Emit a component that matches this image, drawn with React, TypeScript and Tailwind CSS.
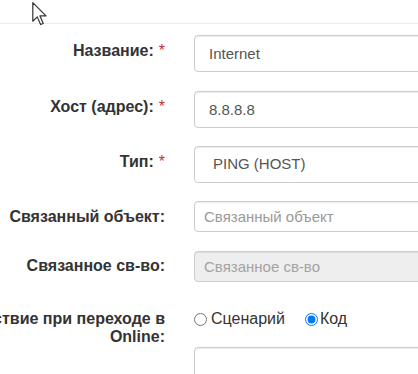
import React from 'react';

const labelCls =
  "w-[250px] shrink-0 pr-[15px] text-right font-bold text-[#333] text-[16px] leading-[18px]";
const boxCls =
  "w-full border border-[#ccc] rounded-[4px] text-[15px] text-[#555] shadow-[inset_0_1px_1px_rgba(0,0,0,0.075)] outline-none";

const Req = () => <span className="text-[#c9302c] font-normal ml-[5px]">*</span>;

const Cursor = () => (
  <svg className="absolute left-[32px] top-[2px]" width="16" height="24" viewBox="0 0 13 20">
    <path
      d="M0.5 0.5 L0.5 16 L4.2 12.4 L7 18.8 L9.2 17.9 L6.5 11.6 L11.5 11.6 Z"
      fill="#fff"
      stroke="#333"
      strokeWidth="1"
      strokeLinejoin="round"
    />
  </svg>
);

export default function App() {
  return (
    <div className="relative w-[418px] h-[374px] overflow-hidden bg-white font-['Liberation_Sans',Arial,sans-serif]">
      <div className="h-[24px] border-b border-[#ebebeb]" />

      <form className="pt-[11px] ml-[-70px]">
        {/* Название */}
        <div className="flex items-start mb-[19px]">
          <label className={`${labelCls} pt-[7px]`}>
            Название:<Req />
          </label>
          <div className="pl-[14px] w-[300px] shrink-0">
            <input className={`${boxCls} bg-white h-[37px] px-[14px]`} defaultValue="Internet" />
          </div>
        </div>

        {/* Хост */}
        <div className="flex items-start mb-[18px]">
          <label className={`${labelCls} pt-[7px]`}>
            Хост (адрес):<Req />
          </label>
          <div className="pl-[14px] w-[300px] shrink-0">
            <input className={`${boxCls} bg-white h-[37px] px-[14px]`} defaultValue="8.8.8.8" />
          </div>
        </div>

        {/* Тип */}
        <div className="flex items-start mb-[18px]">
          <label className={`${labelCls} pt-[7px]`}>
            Тип:<Req />
          </label>
          <div className="pl-[14px] w-[300px] shrink-0">
            <div className={`${boxCls} bg-white h-[37px] flex items-center pl-[18px] text-[#333]`}>
              PING (HOST)
            </div>
          </div>
        </div>

        {/* Связанный объект */}
        <div className="flex items-start mb-[19px]">
          <label className={`${labelCls} pt-[7px]`}>Связанный объект:</label>
          <div className="pl-[14px] w-[300px] shrink-0">
            <input
              className={`${boxCls} bg-white h-[31px] px-[9px] placeholder:text-[#999]`}
              placeholder="Связанный объект"
            />
          </div>
        </div>

        {/* Связанное св-во */}
        <div className="flex items-start mb-[20px]">
          <label className={`${labelCls} pt-[6px]`}>Связанное св-во:</label>
          <div className="pl-[14px] w-[300px] shrink-0">
            <input
              disabled
              className={`${boxCls} bg-[#eee] h-[31px] px-[9px] placeholder:text-[#a3a3a3]`}
              placeholder="Связанное св-во"
            />
          </div>
        </div>

        {/* Действие при переходе в Online */}
        <div className="flex items-start">
          <label className={`${labelCls} pt-[8px] leading-[15px]`}>
            Действие при переходе в Online:
          </label>
          <div className="pl-[14px] w-[300px] shrink-0">
            <div className="flex items-center h-[20px] mt-[7px] text-[16px] text-[#333]">
              <label className="flex items-center">
                <input type="radio" name="act" className="m-0 w-[13px] h-[13px]" />
                <span className="ml-[4px]">Сценарий</span>
              </label>
              <label className="flex items-center ml-[20px]">
                <input type="radio" name="act" defaultChecked className="m-0 w-[13px] h-[13px]" />
                <span className="ml-[2px]">Код</span>
              </label>
            </div>
            <textarea className={`${boxCls} bg-white h-[80px] mt-[18px] resize-none`} />
          </div>
        </div>
      </form>

      <Cursor />
    </div>
  );
}
